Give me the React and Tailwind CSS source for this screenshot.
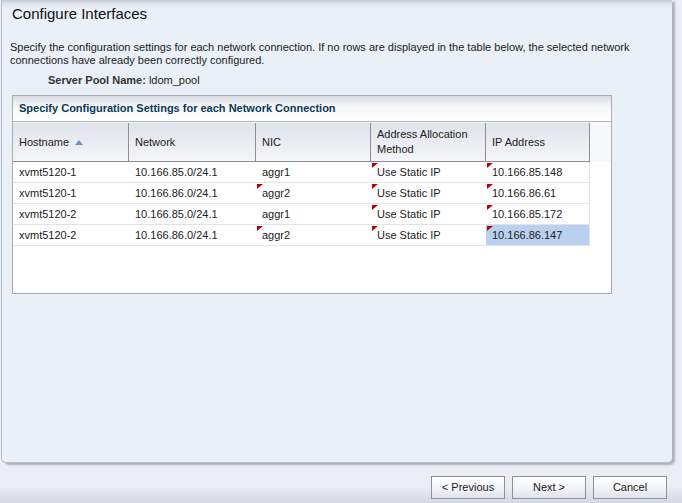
import React from 'react';

const cols = [
  { key: 'host', label: 'Hostname', w: 'w-[116px]' },
  { key: 'net', label: 'Network', w: 'w-[127px]' },
  { key: 'nic', label: 'NIC', w: 'w-[115px]' },
  { key: 'alloc', label: 'Address Allocation Method', w: 'w-[115px]' },
  { key: 'ip', label: 'IP Address', w: 'w-[104px]' },
];

const rows = [
  { host: 'xvmt5120-1', net: '10.166.85.0/24.1', nic: 'aggr1', alloc: 'Use Static IP', ip: '10.166.85.148', flags: ['alloc', 'ip'] },
  { host: 'xvmt5120-1', net: '10.166.86.0/24.1', nic: 'aggr2', alloc: 'Use Static IP', ip: '10.166.86.61', flags: ['nic', 'alloc', 'ip'] },
  { host: 'xvmt5120-2', net: '10.166.85.0/24.1', nic: 'aggr1', alloc: 'Use Static IP', ip: '10.166.85.172', flags: ['alloc', 'ip'] },
  { host: 'xvmt5120-2', net: '10.166.86.0/24.1', nic: 'aggr2', alloc: 'Use Static IP', ip: '10.166.86.147', flags: ['nic', 'alloc', 'ip'], selected: 'ip' },
];

// small red corner marker on changed cells
function Marker() {
  return (
    <svg className="absolute left-[1px] top-[1px]" width="6" height="6" viewBox="0 0 6 6">
      <polygon points="0,0 6,0 0,5" fill="#c00000" />
    </svg>
  );
}

function Button({ children }) {
  return (
    <button className="w-[74px] h-[23px] border border-[#8d9096] bg-[linear-gradient(to_bottom,#ffffff,#f3f5f9_50%,#dde3ee)] text-[11px] text-[#1a1a1a]">
      {children}
    </button>
  );
}

export default function App() {
  return (
    <div className="w-[682px] h-[503px] overflow-hidden bg-[linear-gradient(to_bottom,#eceef5_0px,#eceef5_486px,#d3d8e2_503px)] font-['Liberation_Sans',Arial,sans-serif] text-[#222]">
      <div className="ml-[1px] w-[671px] h-[463px] border-l border-b border-[#b8bcc6] rounded-b-[5px] shadow-[3px_2px_2px_rgba(100,105,120,0.45)] bg-[linear-gradient(to_bottom,#c5cad6_0px,#dfe5ee_4px,#e9f0f8_9px,#e9f0f8_100%)]">
        <h1 className="pl-[10px] pt-[5px] text-[15px] leading-[18px] text-[#111]">Configure Interfaces</h1>

        <p className="pl-[8px] pr-[30px] mt-[18px] text-[11px] leading-[13px] text-[#222]">
          Specify the configuration settings for each network connection. If no rows are displayed in the table below, the selected network connections have already been correctly configured.
        </p>

        <div className="pl-[46px] mt-[7px] text-[11px] leading-[13px]">
          <span className="font-bold text-[#333]">Server Pool Name: </span>
          <span>ldom_pool</span>
        </div>

        <div className="ml-[10px] mt-[8px] w-[600px] h-[199px] border border-[#a9acb2] bg-white">
          <div className="h-[26px] border-b border-[#b0b3b9] bg-[linear-gradient(to_bottom,#d9dce3,#f7f8fa_45%,#ffffff)] pl-[6px] flex items-center text-[11px] font-bold text-[#0b3a58]">
            Specify Configuration Settings for each Network Connection
          </div>

          <div className="flex bg-[#f7f8fb] pt-[1px]">
            {cols.map((c) => (
              <div
                key={c.key}
                className={`${c.w} h-[39px] shrink-0 flex items-center px-[6px] border-r border-b border-[#8c8f95] bg-[linear-gradient(to_bottom,#dfe3ea,#f5f6f8)] text-[11px] leading-[15px] text-[#222]`}
              >
                {c.label}
                {c.key === 'host' && (
                  <svg className="ml-[6px]" width="8" height="5" viewBox="0 0 8 5">
                    <polygon points="4,0 8,5 0,5" fill="#6d90c8" />
                  </svg>
                )}
              </div>
            ))}
          </div>

          {rows.map((r, i) => (
            <div key={i} className="flex">
              {cols.map((c) => (
                <div
                  key={c.key}
                  className={`${c.w} relative h-[21px] shrink-0 flex items-center px-[6px] border-b border-[#e2e3e6] text-[11px] text-[#222] ${c.key === 'ip' ? 'border-r' : ''} ${r.selected === c.key ? 'bg-[#b9d0ee]' : ''}`}
                >
                  {r.flags.includes(c.key) && <Marker />}
                  {r[c.key]}
                </div>
              ))}
            </div>
          ))}
        </div>
      </div>

      <div className="flex justify-end gap-[7px] pr-[15px] mt-[13px]">
        <Button>&lt; Previous</Button>
        <Button>Next &gt;</Button>
        <Button>Cancel</Button>
      </div>
    </div>
  );
}
